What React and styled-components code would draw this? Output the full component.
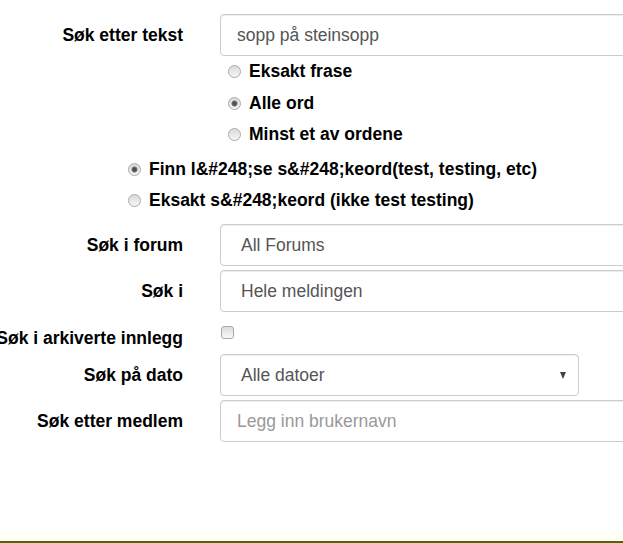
import React from 'react';
import styled, { createGlobalStyle } from 'styled-components';

const GlobalStyle = createGlobalStyle`
  html, body {
    margin: 0;
    padding: 0;
    overflow: hidden;
    background: #fff;
    font-family: "Liberation Sans", Arial, sans-serif;
  }
`;

const Page = styled.div`
  min-height: 100vh;
  box-sizing: border-box;
  display: flex;
  flex-direction: column;
  border-bottom: 2px solid #5b6000;
  background: linear-gradient(to bottom, #fff 0, #fff calc(100% - 18px), #fffef5 100%);
`;

const Form = styled.form`
  display: flex;
  flex-direction: column;
  padding-top: 14px;
`;

const Row = styled.div`
  display: flex;
  align-items: ${(p) => (p.$top ? 'flex-start' : 'center')};
  gap: 37px;
  margin-top: ${(p) => p.$gap || 0}px;
  height: ${(p) => (p.$height ? `${p.$height}px` : 'auto')};
`;

const Label = styled.label`
  flex: none;
  width: 183px;
  display: flex;
  justify-content: flex-end;
  white-space: nowrap;
  font-size: 17.5px;
  line-height: 20px;
  font-weight: bold;
  color: #000;
  padding-top: ${(p) => p.$pad || 0}px;
`;

const TextInput = styled.input`
  flex: none;
  box-sizing: border-box;
  width: 430px;
  height: 42px;
  padding: 0 16px;
  border: 1px solid #ccc;
  border-radius: 4px;
  box-shadow: inset 0 1px 1px rgba(0, 0, 0, 0.075);
  font-family: "Liberation Sans", Arial, sans-serif;
  font-size: 17.5px;
  color: #555;
  outline: none;

  &::placeholder {
    color: #999;
  }
`;

const SelectBox = styled.div`
  flex: none;
  box-sizing: border-box;
  width: ${(p) => p.$width || 430}px;
  height: 42px;
  padding: 0 12px 0 20px;
  display: flex;
  align-items: center;
  justify-content: space-between;
  border: 1px solid #ccc;
  border-radius: 4px;
  box-shadow: inset 0 1px 1px rgba(0, 0, 0, 0.075);
  font-size: 17.5px;
  color: #555;
`;

const Arrow = styled.span`
  width: 0;
  height: 0;
  border-left: 3.5px solid transparent;
  border-right: 3.5px solid transparent;
  border-top: 7px solid #444;
`;

const RadioList = styled.div`
  display: flex;
  flex-direction: column;
  margin-top: ${(p) => p.$gap || 0}px;
  padding-left: ${(p) => p.$indent}px;
`;

const RadioItem = styled.label`
  display: flex;
  align-items: center;
  gap: 8px;
  height: ${(p) => p.$height}px;
  font-size: 17.5px;
  font-weight: bold;
  color: #000;
  white-space: nowrap;
`;

const Radio = styled.input.attrs({ type: 'radio' })`
  appearance: none;
  flex: none;
  margin: 0;
  width: 13px;
  height: 13px;
  border-radius: 50%;
  border: 1px solid #a9a9a9;
  box-sizing: border-box;
  background: linear-gradient(to bottom, #d9d9d9, #f7f7f7);

  &:checked {
    background: radial-gradient(circle, #4a4a4a 0, #555 1.8px, #8a8a8a 2.8px, transparent 3.4px),
      linear-gradient(to bottom, #d9d9d9, #f7f7f7);
  }
`;

const Checkbox = styled.input.attrs({ type: 'checkbox' })`
  appearance: none;
  flex: none;
  margin: 10px 0 0 1px;
  width: 13px;
  height: 13px;
  box-sizing: border-box;
  border: 1px solid #a9a9a9;
  border-radius: 3px;
  background: linear-gradient(to bottom, #dcdcdc, #f8f8f8);
`;

const Offset = styled.div`
  padding-left: 220px;
`;

function App() {
  return (
    <Page>
      <GlobalStyle />
      <Form>
        <Row>
          <Label>Søk etter tekst</Label>
          <TextInput defaultValue="sopp på steinsopp" />
        </Row>
        <Offset>
          <RadioList $indent={8}>
            <RadioItem $height={31.5}>
              <Radio name="match" />
              Eksakt frase
            </RadioItem>
            <RadioItem $height={31.5}>
              <Radio name="match" defaultChecked />
              Alle ord
            </RadioItem>
            <RadioItem $height={31.5}>
              <Radio name="match" />
              Minst et av ordene
            </RadioItem>
          </RadioList>
        </Offset>
        <RadioList $indent={128} $gap={3}>
          <RadioItem $height={31}>
            <Radio name="mode" defaultChecked />
            Finn l&amp;#248;se s&amp;#248;keord(test, testing, etc)
          </RadioItem>
          <RadioItem $height={31}>
            <Radio name="mode" />
            Eksakt s&amp;#248;keord (ikke test testing)
          </RadioItem>
        </RadioList>
        <Row $gap={8.5}>
          <Label>Søk i forum</Label>
          <SelectBox>All Forums</SelectBox>
        </Row>
        <Row $gap={4}>
          <Label>Søk i</Label>
          <SelectBox>Hele meldingen</SelectBox>
        </Row>
        <Row $gap={4} $top $height={34}>
          <Label $pad={11.5}>Søk i arkiverte innlegg</Label>
          <Checkbox />
        </Row>
        <Row $gap={4}>
          <Label>Søk på dato</Label>
          <SelectBox $width={359}>
            Alle datoer
            <Arrow />
          </SelectBox>
        </Row>
        <Row $gap={4}>
          <Label>Søk etter medlem</Label>
          <TextInput placeholder="Legg inn brukernavn" />
        </Row>
      </Form>
    </Page>
  );
}

export default App;
